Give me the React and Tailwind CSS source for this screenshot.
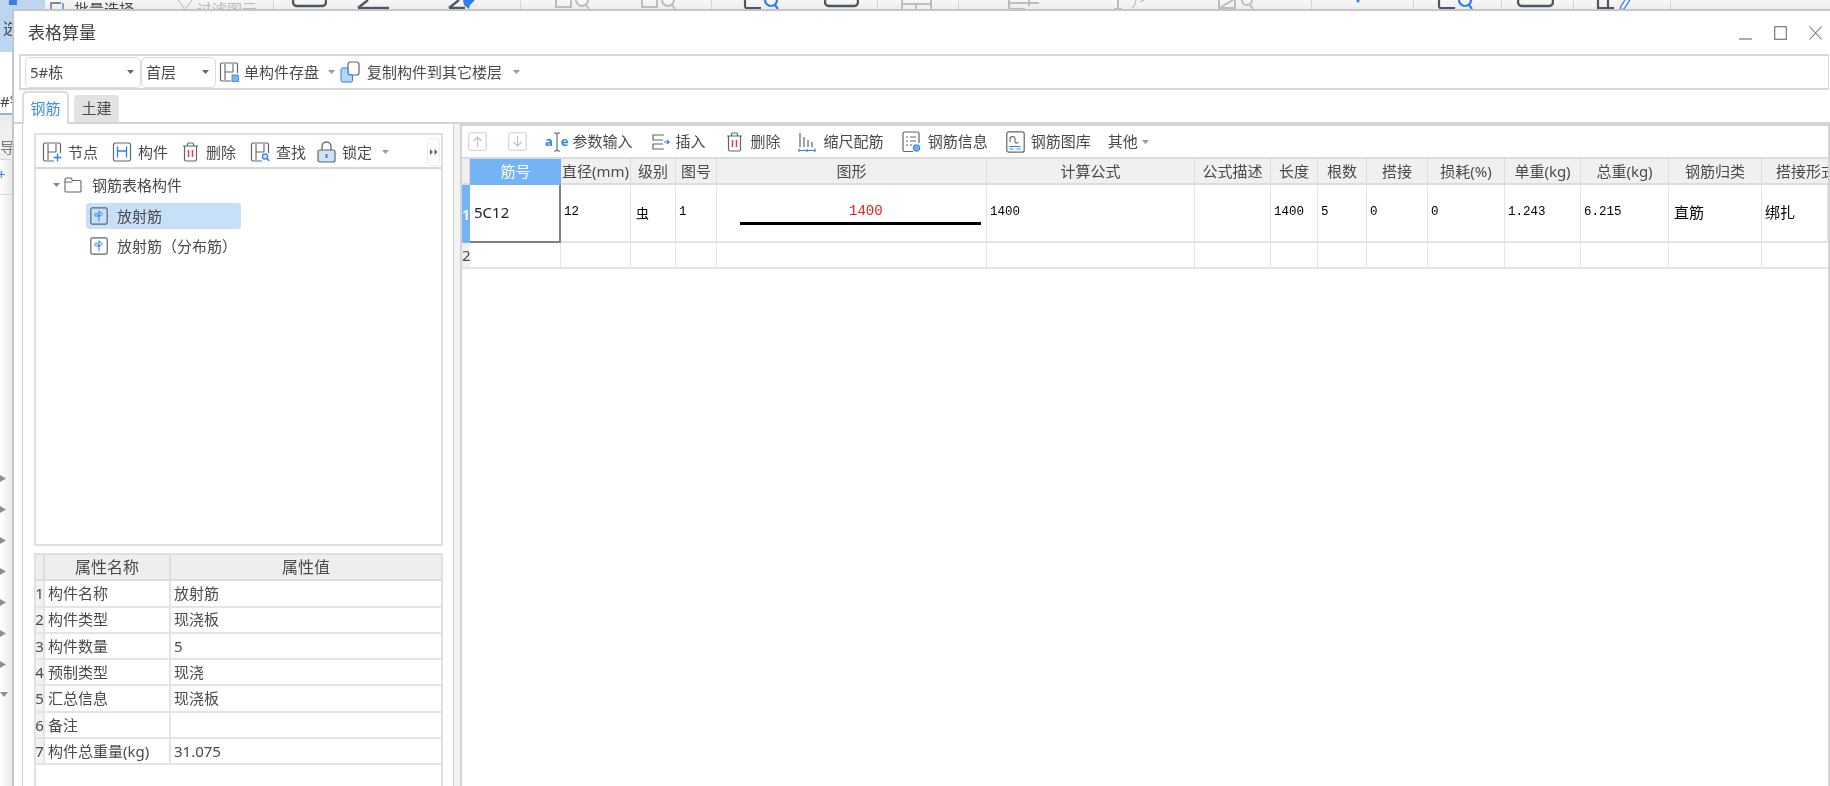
import React from "react";

const D = "#5b6672";
const B = "#2f7fe6";

function HBase({ c = D }) {
  return <path d="M6 2v16M14 2v8M6 10h8" fill="none" stroke={c} strokeWidth="1.1" />;
}
function Frame({ open }) {
  return open ? (
    <path d="M12 19H3a1.5 1.5 0 0 1-1.5-1.5v-15A1.5 1.5 0 0 1 3 1h14a1.5 1.5 0 0 1 1.5 1.5V11" fill="none" stroke={D} strokeWidth="1.2" />
  ) : (
    <rect x="1.5" y="1" width="17" height="18" rx="1.8" fill="none" stroke={D} strokeWidth="1.2" />
  );
}
const IconSave = () => (
  <svg width="20" height="20" viewBox="0 0 20 20"><Frame open /><HBase /><rect x="13" y="13" width="6.5" height="6.5" fill="#7db6ee" stroke={B} strokeWidth=".8" /></svg>
);
const IconCopy = () => (
  <svg width="20" height="22" viewBox="0 0 20 22"><rect x="8" y="1" width="11" height="13" rx="2.5" fill="#fff" stroke={D} strokeWidth="1.2" /><path d="M8 7H2.5A1.5 1.5 0 0 0 1 8.5v11A1.5 1.5 0 0 0 2.5 21H11a1.5 1.5 0 0 0 1.5-1.5V14H9.5A1.5 1.5 0 0 1 8 12.5z" fill="#b5d6f6" stroke={B} strokeWidth="1" /></svg>
);
const IconNode = () => (
  <svg width="20" height="20" viewBox="0 0 20 20"><Frame open /><HBase /><path d="M15.5 11.5v8M11.5 15.5h8" stroke={B} strokeWidth="1.4" /></svg>
);
const IconComp = () => (
  <svg width="20" height="20" viewBox="0 0 20 20"><rect x="1.5" y="1" width="17" height="18" rx="1.8" fill="none" stroke={D} strokeWidth="1.2" /><path d="M5.5 4.5v11M14.5 4.5v11M5.5 9h9" fill="none" stroke={B} strokeWidth="1.3" /></svg>
);
const IconTrash = () => (
  <svg width="17" height="20" viewBox="0 0 17 20"><path d="M1 4h15M5.5 4V2.2A1.2 1.2 0 0 1 6.7 1h3.6a1.2 1.2 0 0 1 1.2 1.2V4M2.5 4v13.5A1.5 1.5 0 0 0 4 19h9a1.5 1.5 0 0 0 1.5-1.5V4" fill="none" stroke={D} strokeWidth="1.2" /><path d="M6.5 8v7M10.5 8v7" stroke="#e2413b" strokeWidth="1.5" /></svg>
);
const IconFind = () => (
  <svg width="20" height="20" viewBox="0 0 20 20"><Frame open /><HBase /><circle cx="15" cy="14.5" r="2.6" fill="#cfe3f8" stroke={B} strokeWidth="1.2" /><path d="M17 16.5l2.2 2.5" stroke={B} strokeWidth="1.3" /></svg>
);
const IconLock = () => (
  <svg width="19" height="22" viewBox="0 0 19 22"><path d="M5 9V5.5a4.5 4.5 0 0 1 9 0V9" fill="none" stroke={D} strokeWidth="1.3" /><rect x="1" y="9" width="17" height="12" rx="2" fill="#cfe3f8" stroke={D} strokeWidth="1.2" /><path d="M9.5 13v4" stroke={B} strokeWidth="2" /></svg>
);
const IconFolder = () => (
  <svg width="18" height="16" viewBox="0 0 18 16"><path d="M1 14V2.5A1.5 1.5 0 0 1 2.5 1H7l1.5 2.5h7A1.5 1.5 0 0 1 17 5v9a1 1 0 0 1-1 1H2a1 1 0 0 1-1-1zM1 5h7.5" fill="none" stroke={D} strokeWidth="1.1" /></svg>
);
const IconElem = () => (
  <svg width="18" height="18" viewBox="0 0 18 18"><rect x=".8" y=".8" width="16.4" height="16.4" rx="1.6" fill="none" stroke={D} strokeWidth="1.2" /><path d="M9 3.5v11M9 5c2 0 3 1 3 2s-1 2-3 2H5.5c-1.2 0-1.5-2.5.5-2.5S9 8 9 9" fill="none" stroke={B} strokeWidth="1" /></svg>
);
const IconUp = ({ down }) => (
  <svg width="19" height="19" viewBox="0 0 19 19"><rect x=".8" y=".8" width="17.4" height="17.4" rx="1.5" fill="none" stroke="#d0d0d0" strokeWidth="1.1" /><path d={down ? "M9.5 4v10M5.5 10l4 4 4-4" : "M9.5 15V5M5.5 9l4-4 4 4"} fill="none" stroke="#c0c0c0" strokeWidth="1.1" /></svg>
);
const IconBeam = () => (
  <svg width="8" height="20" viewBox="0 0 8 20"><path d="M1 1h2l1 1 1-1h2M4 2v16M1 19h2l1-1 1 1h2" fill="none" stroke={D} strokeWidth="1.1" /></svg>
);
const IconInsert = () => (
  <svg width="20" height="16" viewBox="0 0 20 16"><path d="M13 1H2v5h10M12 10H2v5h11" fill="none" stroke={D} strokeWidth="1.2" /><path d="M13 8h5M16 6l2 2-2 2" fill="none" stroke={B} strokeWidth="1.2" /></svg>
);
const IconRuler = () => (
  <svg width="18" height="20" viewBox="0 0 18 20"><path d="M2 1v14M6 5v10M10 8v7M14 10v5" stroke={D} strokeWidth="1.2" /><path d="M1 18.5h16M1 16.5v4M17 16.5v4M9 17v3" stroke={B} strokeWidth="1.1" /></svg>
);
const IconInfo = () => (
  <svg width="19" height="22" viewBox="0 0 19 22"><path d="M11 20.5H2.5A1.5 1.5 0 0 1 1 19V2.5A1.5 1.5 0 0 1 2.5 1h13A1.5 1.5 0 0 1 17 2.5V12" fill="none" stroke={D} strokeWidth="1.2" /><path d="M4 6h2M8 6h6M4 10h2M8 10h6M4 14h2M8 14h2" stroke={D} strokeWidth="1.1" /><circle cx="14.5" cy="17" r="3.3" fill="#6fb0ee" stroke={B} strokeWidth="1" /></svg>
);
const IconLib = () => (
  <svg width="19" height="22" viewBox="0 0 19 22"><rect x=".8" y=".8" width="17.4" height="20.4" rx="2" fill="none" stroke={D} strokeWidth="1.2" /><path d="M4 11V8a2.5 2.5 0 0 1 5 0v3c0 1.5 2.5 1.5 3.5 0" fill="none" stroke={D} strokeWidth="1.1" /><path d="M3.5 15.5h11M3.5 18h4M10.5 18h4" stroke={B} strokeWidth="1.2" /></svg>
);
const Caret = ({ c = "#9a9a9a" }) => (
  <svg width="7" height="4" viewBox="0 0 7 4"><path d="M0 0h7L3.5 4z" fill={c} /></svg>
);

function Seg({ w, children, last }) {
  return (
    <div className={`h-full shrink-0 flex items-end overflow-hidden ${last ? "" : "border-r border-[#d6d6d6]"}`} style={{ width: w }}>
      {children}
    </div>
  );
}
const Dark = "#4e5864";
const G = "#bdbdbd";
const Clip = ({ w, ml, children }) => (
  <svg width={w} height="10" viewBox={`0 0 ${w} 10`} className="shrink-0 block" style={{ marginLeft: ml }}>{children}</svg>
);
const GrayMag = ({ ml }) => (
  <Clip w={37} ml={ml}><path d="M2 0v7h15V0" fill="none" stroke={G} strokeWidth="2" /><circle cx="28" cy="0" r="6" fill="none" stroke={G} strokeWidth="2" /><path d="M32 5l3 4" stroke={G} strokeWidth="2" /></Clip>
);
const DarkMag = ({ ml, w = 37 }) => (
  <Clip w={w} ml={ml}><path d="M2 0v6a2 2 0 0 0 2 2h14" fill="none" stroke={Dark} strokeWidth="2.2" /><circle cx="28" cy="0" r="6" fill="none" stroke={B} strokeWidth="2.2" /><path d="M32 5l3 4" stroke={B} strokeWidth="2.2" /></Clip>
);
const Pill = ({ ml, w = 36 }) => (
  <Clip w={w} ml={ml}><path d={`M1 0v2a4 4 0 0 0 4 4h${w - 10}a4 4 0 0 0 4-4V0`} fill="none" stroke={Dark} strokeWidth="2.4" /></Clip>
);

function TopStrip() {
  return (
    <div className="h-[10px] shrink-0 flex bg-gradient-to-b from-[#f7f7f7] to-[#ececec] overflow-hidden">
      <div className="w-[45px] h-full shrink-0 flex bg-[#bcd5f1]"><div className="ml-[9px] w-[8px] h-[5px] bg-[#3a7fd9]" /></div>
      <Seg w={229}>
        <Clip w={18} ml={5}><path d="M1 10V3h10" fill="none" stroke={D} strokeWidth="1.3" /><path d="M13 3v7" stroke={B} strokeWidth="1.3" /></Clip>
        <span className="ml-[6px] self-start mt-[2px] leading-[15px] text-[15px] text-[#444] whitespace-nowrap">批量选择</span>
        <Clip w={16} ml={43}><path d="M1 0l6 8v2M15 0L9 8v2" fill="none" stroke="#c8c8c8" strokeWidth="1.2" /></Clip>
        <span className="ml-[4px] self-start mt-[2px] leading-[15px] text-[15px] text-[#bbbbbb] whitespace-nowrap">过滤图元</span>
      </Seg>
      <Seg w={247}>
        <Pill ml={18} w={35} />
        <Clip w={34} ml={29}><path d="M2 8h31" fill="none" stroke={Dark} strokeWidth="2.4" /><path d="M12 0L2 8" stroke={Dark} strokeWidth="2.4" /></Clip>
        <Clip w={30} ml={57}><path d="M2 8h16M12 0L2 8" fill="none" stroke={Dark} strokeWidth="2.4" /><path d="M16 0h12l-5 5-1 4-5-4z" fill={B} /></Clip>
      </Seg>
      <Seg w={191}><GrayMag ml={33} /><GrayMag ml={49} /></Seg>
      <Seg w={166}><DarkMag ml={31} /><Pill ml={44} w={35} /></Seg>
      <Seg w={81}><Clip w={33} ml={22}><path d="M2 0v10M2 4h29M16 4v6M31 0v10" fill="none" stroke={G} strokeWidth="2" /></Clip></Seg>
      <Seg w={353}>
        <Clip w={34} ml={48}><path d="M2 0v7a2 2 0 0 0 2 2h14M2 3h30M22 0v6" fill="none" stroke={G} strokeWidth="2" /></Clip>
        <Clip w={38} ml={67}><path d="M6 9h8M10 0v9" stroke={G} strokeWidth="2" /><path d="M28 0q-1 6-4 8M32 2l4-2" fill="none" stroke={G} strokeWidth="1.2" /></Clip>
        <Clip w={39} ml={71}><path d="M2 0v8h16V0M4 7l12-7" fill="none" stroke={G} strokeWidth="2" /><circle cx="30" cy="0" r="5" fill="none" stroke={G} strokeWidth="2" /><path d="M33 5l3 4" stroke={G} strokeWidth="2" /></Clip>
      </Seg>
      <Seg w={102}><Clip w={6} ml={43}><circle cx="3" cy="1" r="1.5" fill={B} /></Clip></Seg>
      <Seg w={88}><DarkMag ml={23} w={40} /></Seg>
      <Seg w={72}><Pill ml={15} w={37} /></Seg>
      <Seg w={97}><Clip w={38} ml={22}><path d="M2 0v8h16M12 0v8" fill="none" stroke={Dark} strokeWidth="2.2" /><path d="M34 0l-6 9-4 1 1-4 4-6" fill="none" stroke={B} strokeWidth="1.3" /></Clip></Seg>
      <Seg w={159} last />
    </div>
  );
}

function LeftStrip() {
  return (
    <div className="w-[13px] shrink-0 flex flex-col overflow-hidden text-[15px] leading-[20px] text-[#444] bg-gradient-to-r from-white to-[#e6e6e6]">
      <div className="h-[42px] bg-[#bcd5f1] pt-[8px] pl-[3px] whitespace-nowrap">选</div>
      <div className="h-[35px] bg-white" />
      <div className="h-[28px] bg-white border-b-2 border-[#8fb4e6] whitespace-nowrap pt-[4px]">#钢</div>
      <div className="h-[7px] bg-[#ececec]" />
      <div className="h-[38px] bg-[#efefef] border-b border-[#d8d8d8] whitespace-nowrap pt-[15px] text-[#777]">导航</div>
      <div className="h-[35px] border-b border-[#d8d8d8] text-[#2f7fe6] whitespace-nowrap -indent-[3px] pt-[4px]">+</div>
      <div className="flex flex-col gap-[24px] mt-[280px]">
        {[0, 1, 2, 3, 4, 5, 6].map((i) => (
          <svg key={i} width="6" height="7" viewBox="0 0 6 7" className="block shrink-0"><path d="M0 0l6 3.5L0 7z" fill="#8e8e8e" /></svg>
        ))}
        <svg width="8" height="5" viewBox="0 0 8 5" className="block shrink-0"><path d="M0 0h8L4 5z" fill="#8e8e8e" /></svg>
      </div>
    </div>
  );
}

function Combo({ w, label }) {
  return (
    <div className="h-[31px] shrink-0 rounded-[5px] border border-[#dcdcdc] flex items-center justify-between pl-[4px] pr-[6px]" style={{ width: w }}>
      <span>{label}</span>
      <Caret c="#666" />
    </div>
  );
}

function TbItem({ icon, label, gap = 6, ml = 0, caret }) {
  return (
    <div className="flex items-center shrink-0" style={{ marginLeft: ml, gap }}>
      {icon}
      <span className="whitespace-nowrap">{label}</span>
      {caret && <span className="ml-[4px] flex"><Caret /></span>}
    </div>
  );
}

const colsRight = "grid-cols-[8px_91px_70px_45px_41px_270px_208px_76px_47px_49px_61px_77px_76px_88px_93px_66px]";
const heads = ["", "筋号", "直径(mm)", "级别", "图号", "图形", "计算公式", "公式描述", "长度", "根数", "搭接", "损耗(%)", "单重(kg)", "总重(kg)", "钢筋归类", "搭接形式"];

function RebarTable() {
  const hc = "h-[26px] flex items-center justify-center border-r border-b-2 border-[#dcdcdc] bg-[#f0f0f0] whitespace-nowrap overflow-hidden";
  const dc = "border-r border-b-2 border-[#e4e4e4] flex items-center overflow-hidden whitespace-nowrap";
  const mono = "font-['Liberation_Mono',monospace] text-[12.5px] text-black pl-[3px] pb-[1px]";
  return (
    <div className={`grid ${colsRight} grid-rows-[26px_58px_26px] shrink-0`}>
      {heads.map((h, i) =>
        i === 1 ? (
          <div key={i} className="h-[26px] flex items-center justify-center bg-[#74b3f5] text-white border-b-2 border-[#74b3f5]">{h}</div>
        ) : i === 15 ? (
          <div key={i} className={`${hc} !justify-start pl-[14px] !border-r-0`}>{h}</div>
        ) : (
          <div key={i} className={hc}>{h}</div>
        )
      )}
      <div className="bg-[#74b3f5] text-white font-semibold flex items-center justify-center overflow-hidden">1</div>
      <div className="border-r-2 border-b-2 border-[#808080] flex items-center pl-[4px] pb-[2px] text-[#222]">5C12</div>
      <div className={`${dc} ${mono}`}>12</div>
      <div className={`${dc} pl-[5px] text-[13px] text-black pt-[1px] leading-none`}>虫</div>
      <div className={`${dc} ${mono}`}>1</div>
      <div className={`${dc} flex-col !items-stretch justify-start pt-[18px]`}>
        <div className="font-['Liberation_Mono',monospace] text-[14px] leading-[16px] text-[#f02020] pl-[132px]">1400</div>
        <div className="h-[3px] bg-black ml-[23px] w-[241px] mt-[3px]" />
      </div>
      <div className={`${dc} ${mono}`}>1400</div>
      <div className={dc} />
      <div className={`${dc} ${mono}`}>1400</div>
      <div className={`${dc} ${mono}`}>5</div>
      <div className={`${dc} ${mono}`}>0</div>
      <div className={`${dc} ${mono}`}>0</div>
      <div className={`${dc} ${mono}`}>1.243</div>
      <div className={`${dc} ${mono}`}>6.215</div>
      <div className={`${dc} text-black pl-[5px] pb-[2px]`}>直筋</div>
      <div className={`${dc} text-black pl-[3px] pb-[2px]`}>绑扎</div>
      <div className="bg-[#f0f0f0] border-b-2 border-[#e4e4e4] flex items-center overflow-hidden">2</div>
      {Array.from({ length: 14 }).map((_, i) => (
        <div key={i} className={dc} />
      ))}
      <div className="border-b-2 border-[#e4e4e4]" />
    </div>
  );
}

const props = [
  ["构件名称", "放射筋"],
  ["构件类型", "现浇板"],
  ["构件数量", "5"],
  ["预制类型", "现浇"],
  ["汇总信息", "现浇板"],
  ["备注", ""],
  ["构件总重量(kg)", "31.075"],
];

function PropTable() {
  const b = "border-r-2 border-b-2 border-[#e4e4e4] flex items-center overflow-hidden whitespace-nowrap";
  return (
    <div className="flex-1 min-h-0 border-2 border-b-0 border-[#e0e0e0] bg-white">
      <div className="grid grid-cols-[9px_126px_1fr] auto-rows-[26.3px]">
        <div className="bg-[#eeeeee] border-r-2 border-b-2 border-[#dcdcdc]" />
        <div className="bg-[#eeeeee] border-r-2 border-b-2 border-[#dcdcdc] flex items-center justify-center text-[16px]">属性名称</div>
        <div className="bg-[#eeeeee] border-b-2 border-[#dcdcdc] flex items-center justify-center text-[16px]">属性值</div>
        {props.map((p, i) => (
          <React.Fragment key={i}>
            <div className={`${b} bg-[#f2f2f2] justify-center !overflow-visible`}>{i + 1}</div>
            <div className={`${b} pl-[3px]`}>{p[0]}</div>
            <div className="border-b-2 border-[#e4e4e4] flex items-center pl-[3px]">{p[1]}</div>
          </React.Fragment>
        ))}
      </div>
    </div>
  );
}

export default function App() {
  return (
    <div className="w-[1830px] h-[786px] overflow-hidden flex flex-col bg-white text-[15px] text-[#4a4a4a] font-['Noto_Sans','Noto_Sans_CJK_SC',sans-serif] blur-[0.45px]">
      <TopStrip />
      <div className="flex-1 flex min-h-0">
        <LeftStrip />
        <div className="flex-1 flex flex-col min-w-0 bg-white border-l-2 border-t-2 border-[#c6c6c6] -ml-[1px] -mt-[1px]">
          <div className="h-[43px] shrink-0 flex items-center justify-between pl-[14px] pr-[8px]">
            <span className="text-[17px] text-[#3f3f3f]">表格算量</span>
            <div className="flex items-center gap-[22px] text-[#888]">
              <svg width="13" height="14" viewBox="0 0 13 14"><path d="M0 13h13" stroke="#8a8a8a" strokeWidth="1.4" /></svg>
              <svg width="13" height="14" viewBox="0 0 13 14"><rect x=".7" y=".7" width="11.6" height="12.6" fill="none" stroke="#777" strokeWidth="1.2" /></svg>
              <svg width="13" height="14" viewBox="0 0 13 14"><path d="M.5.5l12 13M12.5.5l-12 13" stroke="#777" strokeWidth="1.1" /></svg>
            </div>
          </div>
          <div className="h-[36px] shrink-0 ml-[5px] mr-[1px] border-2 border-[#d8d8d8] border-r flex items-center pl-[4px]">
            <Combo w={116} label="5#栋" />
            <Combo w={75} label="首层" />
            <TbItem icon={<IconSave />} label="单构件存盘" caret ml={3} gap={5} />
            <TbItem icon={<IconCopy />} label="复制构件到其它楼层" caret ml={5} gap={7} />
          </div>
          <div className="h-[34px] shrink-0 flex items-end pl-[8px] border-b-2 border-[#d4d4d4]">
            <div className="w-[47px] h-[33px] -mb-[2px] bg-white border-2 border-b-0 border-[#dcdcdc] rounded-t-[5px] flex items-center justify-center text-[#3f8ff0] z-10">钢筋</div>
            <div className="w-[45px] h-[27px] ml-[5px] bg-[#e2e2e2] rounded-t-[4px] flex items-center justify-center">土建</div>
          </div>
          <div className="flex-1 min-h-0 flex">
            <div className="w-[432px] shrink-0 ml-[8px] border-l border-r border-[#ccd3da] pl-[11px] pr-[10px] pt-[9px] flex flex-col">
              <div className="h-[413px] shrink-0 border-2 border-[#e0e0e0] flex flex-col">
                <div className="h-[34px] shrink-0 border-b-2 border-[#d8d8d8] flex items-center pl-[6px] pt-[2px]">
                  <TbItem icon={<IconNode />} label="节点" />
                  <TbItem icon={<IconComp />} label="构件" ml={14} />
                  <TbItem icon={<IconTrash />} label="删除" ml={14} gap={7} />
                  <TbItem icon={<IconFind />} label="查找" ml={14} />
                  <TbItem icon={<IconLock />} label="锁定" ml={11} gap={6} caret />
                  <div className="ml-auto mr-[1px] w-[13px] h-[28px] rounded-[3px] border border-[#ececec] flex items-center justify-center text-[#555]">
                    <svg width="8" height="6" viewBox="0 0 8 6"><path d="M0 0l3 3-3 3zM4.5 0l3 3-3 3z" fill="#666" /></svg>
                  </div>
                </div>
                <div className="flex-1 pl-[17px] pt-[2px]">
                  <div className="h-[28px] flex items-center">
                    <span className="flex w-[11px]"><Caret c="#888" /></span>
                    <IconFolder />
                    <span className="ml-[10px]">钢筋表格构件</span>
                  </div>
                  <div className="ml-[33px] mt-[4px] w-[155px] h-[26px] rounded-[3px] bg-[#c8dff8] flex items-center pl-[4px] gap-[9px]">
                    <IconElem />
                    <span>放射筋</span>
                  </div>
                  <div className="ml-[33px] mt-[6px] h-[22px] flex items-center pl-[4px] gap-[9px]">
                    <IconElem />
                    <span>放射筋（分布筋）</span>
                  </div>
                </div>
              </div>
              <div className="h-[7px] shrink-0" />
              <PropTable />
            </div>
            <div className="w-[6px] shrink-0 bg-[#f3f3f3]" />
            <div className="flex-1 min-w-0 flex flex-col border-l-2 border-t-2 border-r-2 border-[#d4d4d8]">
              <div className="h-[33px] shrink-0 border-b-2 border-[#dcdcdc] flex items-center pl-[6px]">
                <IconUp />
                <span className="ml-[21px] flex"><IconUp down /></span>
                <div className="ml-[18px] flex items-center shrink-0 gap-[4px]">
                  <span className="flex items-center text-[#2f7fe6] font-bold text-[13px] leading-none">a<IconBeam />e</span>
                  <span className="whitespace-nowrap">参数输入</span>
                </div>
                <TbItem icon={<IconInsert />} label="插入" ml={18} gap={5} />
                <TbItem icon={<IconTrash />} label="删除" ml={20} gap={8} />
                <TbItem icon={<IconRuler />} label="缩尺配筋" ml={17} gap={8} />
                <TbItem icon={<IconInfo />} label="钢筋信息" ml={18} gap={7} />
                <TbItem icon={<IconLib />} label="钢筋图库" ml={18} gap={6} />
                <TbItem icon={<span />} label="其他" ml={17} gap={0} caret />
              </div>
              <RebarTable />
            </div>
          </div>
        </div>
      </div>
    </div>
  );
}
